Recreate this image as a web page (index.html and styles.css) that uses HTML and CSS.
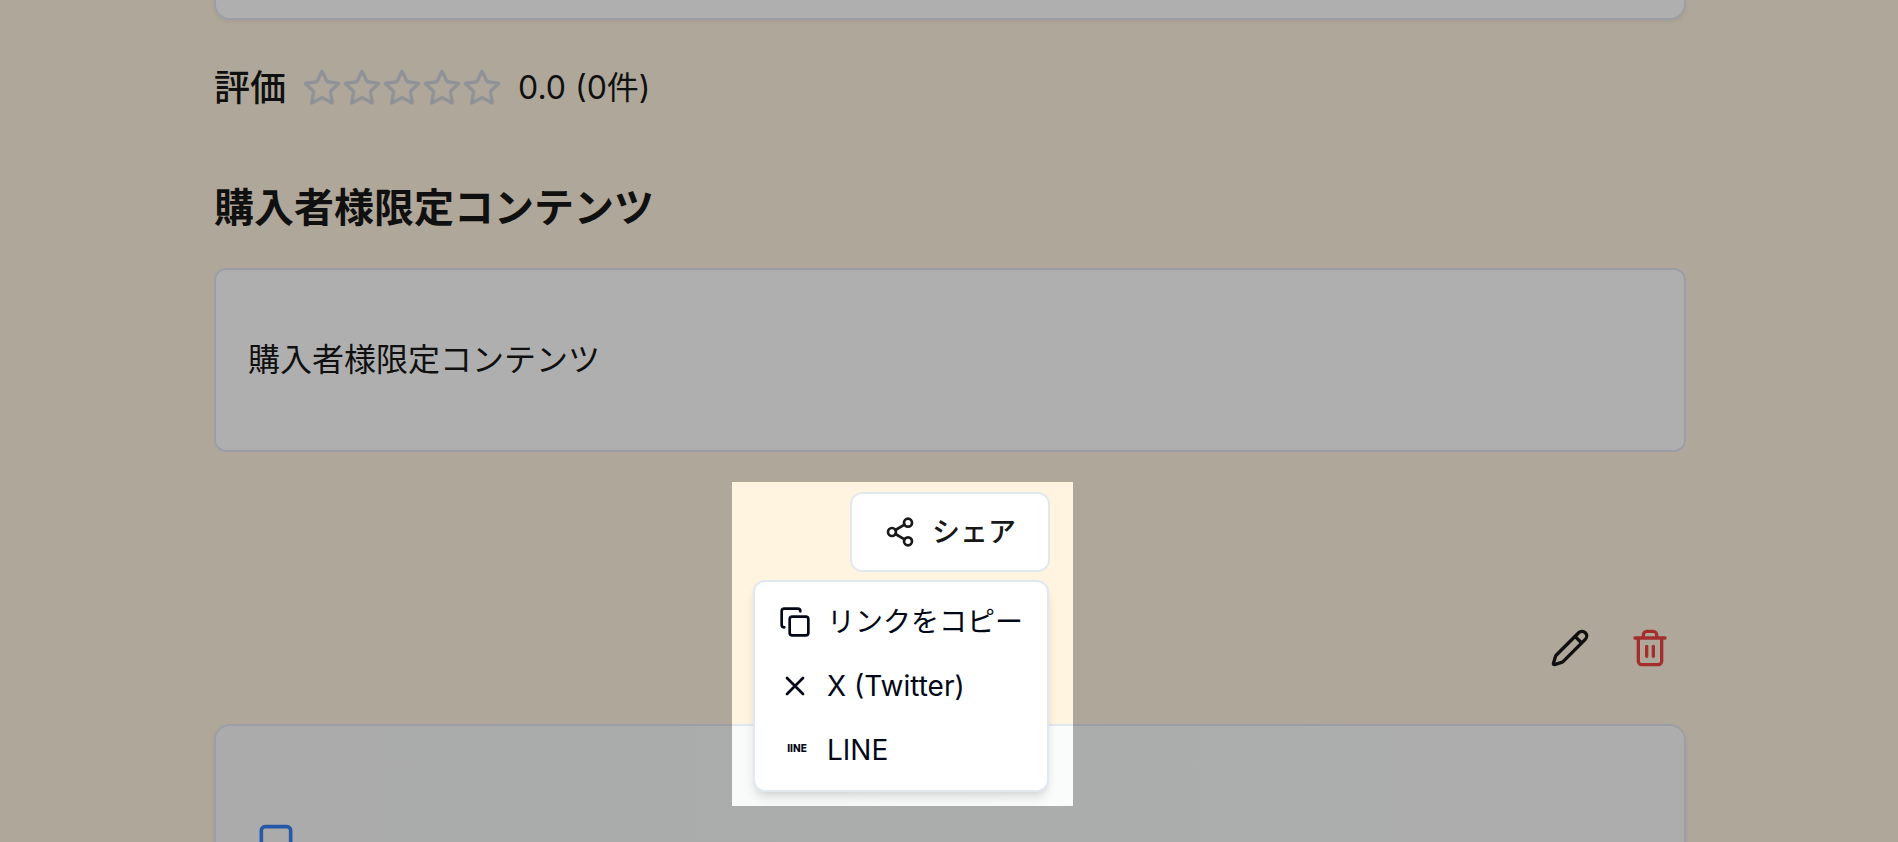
FILE: index.html
```html
<!DOCTYPE html>
<html lang="ja">
<head>
  <meta charset="UTF-8">
  <meta name="viewport" content="width=device-width, initial-scale=1">
  <title>購入者様限定コンテンツ</title>
  <link rel="stylesheet" href="styles.css">
</head>
<body>
  <svg class="defs" aria-hidden="true">
    <symbol id="star" viewBox="0 0 24 24">
      <polygon points="12 2 15.09 8.26 22 9.27 17 14.14 18.18 21.02 12 17.77 5.82 21.02 7 14.14 2 9.27 8.91 8.26 12 2"/>
    </symbol>
  </svg>

  <main class="page">
    <section class="card card-top"></section>

    <div class="rating">
      <span class="rating-label">評価</span>
      <span class="stars">
        <svg><use href="#star"/></svg>
        <svg><use href="#star"/></svg>
        <svg><use href="#star"/></svg>
        <svg><use href="#star"/></svg>
        <svg><use href="#star"/></svg>
      </span>
      <span class="rating-value">0.0 (0件)</span>
    </div>

    <h2>購入者様限定コンテンツ</h2>
    <section class="limited">購入者様限定コンテンツ</section>

    <div class="share">
      <button class="share-button">
        <svg viewBox="0 0 24 24">
          <circle cx="18" cy="5" r="3"/><circle cx="6" cy="12" r="3"/><circle cx="18" cy="19" r="3"/>
          <path d="M8.59 13.51l6.83 3.98M15.41 6.51l-6.82 3.98"/>
        </svg>
        シェア
      </button>
      <div class="spotlight"></div>
      <div class="menu">
        <button class="menu-item">
          <svg viewBox="0 0 24 24">
            <rect x="8" y="8" width="14" height="14" rx="2"/>
            <path d="M4 16c-1.1 0-2-.9-2-2V4c0-1.1.9-2 2-2h10c1.1 0 2 .9 2 2"/>
          </svg>
          リンクをコピー
        </button>
        <button class="menu-item">
          <svg viewBox="0 0 24 24"><path d="M18 6L6 18M6 6l12 12"/></svg>
          X (Twitter)
        </button>
        <button class="menu-item">
          <svg class="line-mark" viewBox="0 0 32 32" aria-hidden="true">
            <text x="18" y="18" text-anchor="middle">IINE</text>
          </svg>
          LINE
        </button>
      </div>
    </div>

    <div class="actions">
      <button class="icon-button" aria-label="編集">
        <svg viewBox="0 0 24 24">
          <path d="M21.174 6.812a1 1 0 0 0-3.986-3.987L3.842 16.174a2 2 0 0 0-.5.83l-1.321 4.352a.5.5 0 0 0 .623.622l4.353-1.32a2 2 0 0 0 .83-.497zM15 5l4 4"/>
        </svg>
      </button>
      <button class="icon-button delete" aria-label="削除">
        <svg viewBox="0 0 24 24">
          <path d="M3 6h18M19 6v14c0 1-1 2-2 2H7c-1 0-2-1-2-2V6M8 6V4c0-1 1-2 2-2h4c1 0 2 1 2 2v2M10 11v6M14 11v6"/>
        </svg>
      </button>
    </div>

    <section class="card card-author">
      <svg class="book" viewBox="0 0 24 24">
        <rect x="4" y="2" width="16" height="20" rx="2"/>
      </svg>
    </section>
  </main>
</body>
</html>
```
FILE: styles.css
```css
* {
  box-sizing: border-box;
}
body {
  margin: 0;
  padding-left: 2px;
  height: 100vh;
  overflow: hidden;
  background: #fff4e0;
  color: #181818;
  font-family: Inter, "Noto Sans CJK JP", sans-serif;
  line-height: 1.5;
}
svg {
  fill: none;
  stroke: currentColor;
  stroke-width: 2;
  stroke-linecap: round;
  stroke-linejoin: round;
  flex-shrink: 0;
}
button {
  font: inherit;
  color: inherit;
  background: none;
  border: none;
  cursor: pointer;
}
.defs {
  display: none;
}
.page {
  max-width: 1536px;
  margin: 0 auto;
  padding: 0 32px;
}
.card {
  background: #fff;
  border: 2px solid #e2e8f0;
  border-radius: 16px;
  box-shadow: 0 2px 4px rgba(0, 0, 0, 0.06);
}
.card-top {
  height: 20px;
  border-top: none;
  border-radius: 0 0 16px 16px;
}
.rating {
  display: flex;
  align-items: center;
  height: 56px;
  margin-top: 40px;
}
.rating-label {
  font-size: 36px;
  font-weight: 500;
}
.stars {
  display: flex;
  margin: 0 16px;
  color: #d1d5db;
}
.stars svg {
  width: 40px;
  height: 40px;
}
.rating-value {
  font-size: 32px;
}
h2 {
  margin: 64px 0 32px;
  font-size: 40px;
  line-height: 56px;
  font-weight: 700;
}
.limited {
  padding: 64px 32px;
  background: #fff;
  border: 2px solid #e2e8f0;
  border-radius: 12px;
  font-size: 32px;
  line-height: 52px;
}

/* share button with the open menu */
.share {
  position: relative;
  display: flex;
  justify-content: flex-end;
  width: 200px;
  margin: 40px auto 0;
}
.share-button {
  display: flex;
  align-items: center;
  gap: 16px;
  height: 80px;
  padding: 0 32px;
  background: #fff;
  border: 2px solid #e2e8f0;
  border-radius: 12px;
  font-size: 28px;
  font-weight: 500;
  line-height: 40px;
  white-space: nowrap;
}
.share-button svg,
.menu-item svg {
  width: 32px;
  height: 32px;
}
.spotlight {
  position: absolute;
  z-index: 3;
  top: -10px;
  right: -23px;
  width: 341px;
  height: 324px;
  box-shadow: 0 0 0 3000px rgba(0, 0, 0, 0.314);
  pointer-events: none;
}
.menu {
  position: absolute;
  z-index: 2;
  top: 88px;
  right: 1px;
  width: 296px;
  padding: 8px;
  background: #fff;
  border: 2px solid #e2e8f0;
  border-radius: 12px;
  box-shadow: 0 8px 12px -2px rgba(0, 0, 0, 0.1), 0 4px 8px -4px rgba(0, 0, 0, 0.1);
  color: #020817;
}
.menu-item {
  display: flex;
  align-items: center;
  gap: 16px;
  width: 100%;
  height: 64px;
  padding: 0 16px;
  font-size: 28px;
  line-height: 40px;
  white-space: nowrap;
}
.line-mark {
  fill: currentColor;
  stroke: none;
  font-size: 10px;
  font-weight: 800;
}

.actions {
  display: flex;
  justify-content: flex-end;
  gap: 8px;
  margin-top: 36px;
}
.icon-button {
  display: flex;
  align-items: center;
  justify-content: center;
  width: 72px;
  height: 80px;
}
.icon-button svg {
  width: 40px;
  height: 40px;
}
.delete {
  color: #ef4444;
}
.card-author {
  margin-top: 36px;
  padding: 97px 38px;
  background: linear-gradient(90deg, #f9fafa, #f8fafa 30%, #fdfdfd);
}
.book {
  width: 44px;
  height: 44px;
  color: #3b82f6;
}
```
